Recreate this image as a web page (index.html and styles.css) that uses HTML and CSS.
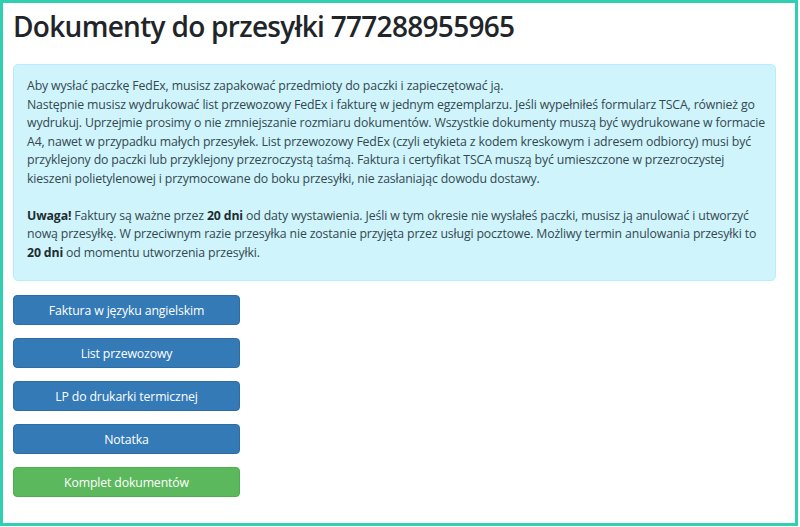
FILE: index.html
```html
<!DOCTYPE html>
<html lang="pl">
<head>
<meta charset="utf-8">
<title>Dokumenty do przesyłki</title>
<link rel="stylesheet" href="styles.css">
</head>
<body>
<div class="frame">
  <h1 class="title">Dokumenty do przesyłki 777288955965</h1>
  <div class="alert">
    <p>Aby wysłać paczkę FedEx, musisz zapakować przedmioty do paczki i zapieczętować ją.<br>
    Następnie musisz wydrukować list przewozowy FedEx i fakturę w jednym egzemplarzu. Jeśli wypełniłeś formularz TSCA, również go<br>
    wydrukuj. Uprzejmie prosimy o nie zmniejszanie rozmiaru dokumentów. Wszystkie dokumenty muszą być wydrukowane w formacie<br>
    A4, nawet w przypadku małych przesyłek. List przewozowy FedEx (czyli etykieta z kodem kreskowym i adresem odbiorcy) musi być<br>
    przyklejony do paczki lub przyklejony przezroczystą taśmą. Faktura i certyfikat TSCA muszą być umieszczone w przezroczystej<br>
    kieszeni polietylenowej i przymocowane do boku przesyłki, nie zasłaniając dowodu dostawy.</p>
    <p><b>Uwaga!</b> Faktury są ważne przez <b>20 dni</b> od daty wystawienia. Jeśli w tym okresie nie wysłałeś paczki, musisz ją anulować i utworzyć<br>
    nową przesyłkę. W przeciwnym razie przesyłka nie zostanie przyjęta przez usługi pocztowe. Możliwy termin anulowania przesyłki to<br>
    <b>20 dni</b> od momentu utworzenia przesyłki.</p>
  </div>
  <div class="buttons">
    <a class="btn btn-blue" href="#">Faktura w języku angielskim</a>
    <a class="btn btn-blue" href="#">List przewozowy</a>
    <a class="btn btn-blue" href="#">LP do drukarki termicznej</a>
    <a class="btn btn-blue" href="#">Notatka</a>
    <a class="btn btn-green" href="#">Komplet dokumentów</a>
  </div>
</div>
</body>
</html>
```
FILE: styles.css
```css
html, body {
  margin: 0;
  padding: 0;
  background: #ffffff;
}
body {
  font-family: "Open Sans", "Noto Sans", "DejaVu Sans", sans-serif;
  color: #212529;
}
.frame {
  box-sizing: border-box;
  width: 798px;
  height: 526px;
  border: 3px solid #2fcfb0;
  padding: 0 19px 0 10px;
  background: #fff;
}
.title {
  margin: 0;
  padding-top: 5px;
  font-size: 28px;
  font-weight: 600;
  line-height: 36px;
  color: #212529;
  letter-spacing: -0.7px;
}
.alert {
  margin-top: 20px;
  background: #cff4fc;
  border: 1px solid #b6effb;
  border-radius: 5px;
  padding: 12px 6px 18px 13px;
  color: #34484e;
  font-size: 12.3px;
  letter-spacing: -0.14px;
  line-height: 18.5px;
}
.alert p {
  margin: 0;
}
.alert p + p {
  margin-top: 18.5px;
}
.alert b {
  font-weight: 700;
  color: #1e2d31;
}
.buttons {
  display: flex;
  flex-direction: column;
  align-items: flex-start;
  gap: 13px;
  margin-top: 14px;
}
.btn {
  box-sizing: border-box;
  display: flex;
  align-items: center;
  justify-content: center;
  width: 227px;
  height: 30px;
  border-radius: 4px;
  border: 1px solid #2e6da4;
  color: #fff;
  text-decoration: none;
  font-size: 12.3px;
  letter-spacing: -0.15px;
}
.btn-blue {
  background: #337ab7;
}
.btn-green {
  background: #5cb85c;
  border-color: #4cae4c;
}
```
